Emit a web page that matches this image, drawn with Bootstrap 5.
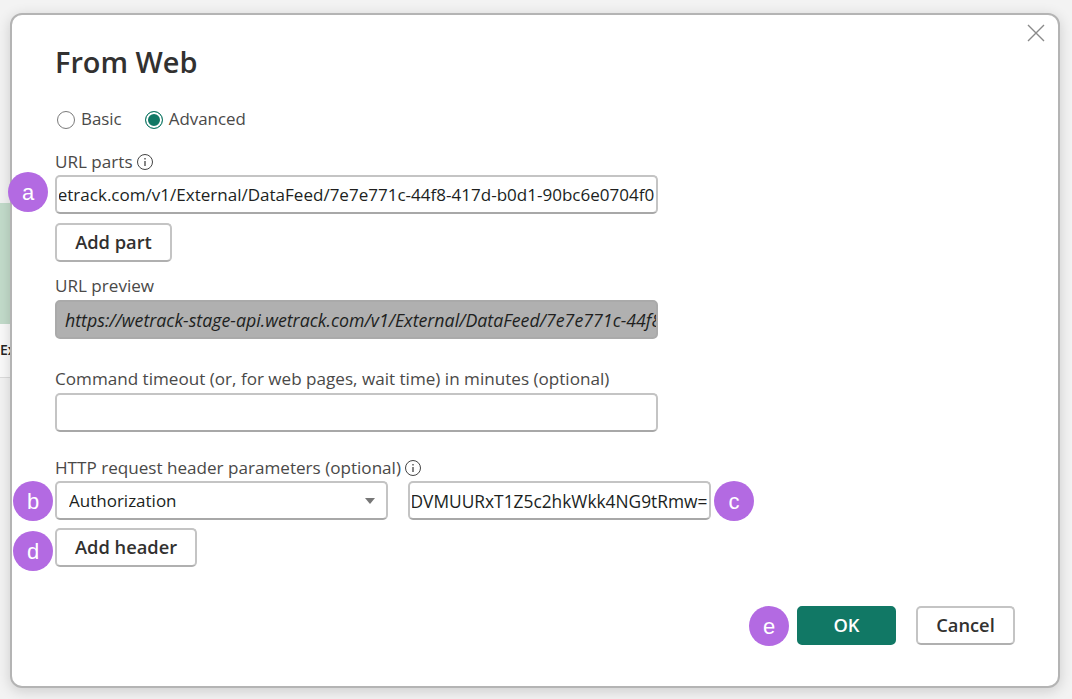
<!DOCTYPE html>
<html lang="en">
<head>
    <meta charset="UTF-8">
    <meta name="viewport" content="width=device-width, initial-scale=1">
    <title>From Web</title>
    <link href="https://cdn.jsdelivr.net/npm/bootstrap@5.3.0/dist/css/bootstrap.min.css" rel="stylesheet">
    <script src="https://cdn.jsdelivr.net/npm/bootstrap@5.3.0/dist/js/bootstrap.bundle.min.js"></script>
    <style>
        html, body { height: 100%; }
        body {
            background: #f3f3f3;
            font-family: "Open Sans", "Noto Sans", sans-serif;
            font-size: 17px;
            color: #3b3a39;
            overflow: hidden;
        }
        .behind-strip { width: 10px; margin-top: 203px; overflow: hidden; }
        .behind-green { height: 121px; background: #c3dccb; }
        .behind-white {
            height: 54px;
            background: #fafafa;
            border-bottom: 1px solid #dcdcdc;
            font-size: 14px;
            font-weight: 600;
            color: #252423;
            white-space: nowrap;
            padding-top: 15px;
        }
        .dialog-box {
            position: absolute;
            left: 10px;
            top: 13px;
            width: 1050px;
            height: 675px;
            background: #fff;
            border: 2px solid #b4b4b4;
            border-radius: 12px;
            box-shadow: 0 3px 14px rgba(0, 0, 0, .16);
            padding: 25px 43px 0 43px;
        }
        .close-x { position: absolute; right: 12px; top: 8px; width: 20px; height: 20px; color: #8a8a8a; }
        .dialog-title { font-size: 28.9px; font-weight: 600; line-height: 44px; margin: 0 0 24px; color: #323130; }
        .radio-row { height: 30px; gap: 23px; margin-bottom: 14px; padding-left: 2px; }
        .radio-item { gap: 6px; font-size: 16.9px; line-height: 24px; color: #4a4948; margin-top: -1px; }
        .radio-item .form-check-input {
            margin: 4px 0 0;
            width: 18px;
            height: 18px;
            border: 1.5px solid #7a7a7a;
        }
        .radio-item .form-check-input:checked {
            background-color: #117865;
            border-color: #117865;
            background-image: none;
            box-shadow: inset 0 0 0 2px #fff;
        }
        .field-label { font-size: 17.1px; line-height: 20px; margin: 0 0 4px; color: #4a4948; display: flex; align-items: center; gap: 3px; }
        .url-label { margin-bottom: 3px; }
        .pbi-input {
            height: 39px;
            border: 2px solid #c4c4c4;
            border-bottom-color: #a8a8a8;
            border-radius: 5px;
            font-size: 17.05px;
            padding: 0 2px;
            color: #201f1e;
            background-color: #fff;
        }
        .wide-field { width: 603px; }
        .pbi-input.preview {
            background: #b0b0b0;
            border-color: #aaa;
            font-style: italic;
            font-size: 17.8px;
            padding-left: 8px;
            padding-right: 0;
            color: #201f1e;
        }
        .pbi-input.header-key {
            width: 333px;
            padding-left: 12px;
            font-size: 17px;
            background-image: url("data:image/svg+xml,%3csvg xmlns='http://www.w3.org/2000/svg' viewBox='0 0 10 6'%3e%3cpath fill='%23777' d='M0 0h10L5 6z'/%3e%3c/svg%3e");
            background-size: 10px 6px;
            background-position: right 11px center;
        }
        .pbi-input.header-value { width: 303px; font-size: 17.35px; }
        .pbi-btn {
            height: 39px;
            background: #fff;
            border: 2px solid #c4c4c4;
            border-bottom-color: #b0b0b0;
            border-radius: 5px;
            font-size: 18.3px;
            font-weight: 600;
            color: #323130;
            padding: 0 0 2px;
            --bs-btn-hover-bg: #f3f2f1;
        }
        .btn-part { width: 117px; margin-top: 9px; }
        .btn-header { width: 142px; margin-top: 8px; }
        .btn-ok { width: 99px; background: #117865; border-color: #117865; color: #fff; }
        .btn-cancel { width: 99px; }
        .preview-label { margin-top: 14px; }
        .timeout-label { margin-top: 30px; }
        .http-label { margin-top: 26px; margin-bottom: 3px; }
        .header-row { gap: 20px; }
        .footer-row { gap: 20px; margin-top: 39px; }
        .step-dot {
            position: absolute;
            width: 40px;
            height: 40px;
            border-radius: 50%;
            background: #b36ae2;
            color: #fff;
            font-family: "Liberation Sans", sans-serif;
            font-size: 22px;
            line-height: 41px;
            text-align: center;
        }
        .dot-a { left: 8px; top: 172px; }
        .dot-b { left: 13px; top: 481px; }
        .dot-c { left: 714px; top: 481px; }
        .dot-d { left: 13px; top: 531px; }
        .dot-e { left: 749px; top: 606px; }
    </style>
</head>
<body>
    <div class="behind-strip">
        <div class="behind-green"></div>
        <div class="behind-white">Ex</div>
    </div>

    <div class="dialog-box">
        <svg class="close-x" viewBox="0 0 20 20" fill="none" stroke="currentColor" stroke-width="1.4"><path d="M2 2l16 16M18 2L2 18"/></svg>
        <h1 class="dialog-title">From Web</h1>

        <div class="d-flex radio-row">
            <label class="d-flex radio-item"><input class="form-check-input" type="radio" name="mode">Basic</label>
            <label class="d-flex radio-item"><input class="form-check-input" type="radio" name="mode" checked>Advanced</label>
        </div>

        <label class="field-label url-label">URL parts
            <svg width="18" height="18" viewBox="0 0 18 18" fill="none" stroke="#444"><circle cx="9" cy="9" r="7.5"/><path d="M9 8v5M9 5v1.4" stroke-width="1.3"/></svg>
        </label>
        <input class="form-control pbi-input wide-field" id="urlPart" type="text" value="https://wetrack-stage-api.wetrack.com/v1/External/DataFeed/7e7e771c-44f8-417d-b0d1-90bc6e0704f0">
        <button class="btn pbi-btn btn-part d-block" type="button">Add part</button>

        <label class="field-label preview-label">URL preview</label>
        <input class="form-control pbi-input preview wide-field" type="text" readonly value="https://wetrack-stage-api.wetrack.com/v1/External/DataFeed/7e7e771c-44f8-417d-b0d1-90bc6e0704f0">

        <label class="field-label timeout-label">Command timeout (or, for web pages, wait time) in minutes (optional)</label>
        <input class="form-control pbi-input wide-field" type="text">

        <label class="field-label http-label">HTTP request header parameters (optional)
            <svg width="18" height="18" viewBox="0 0 18 18" fill="none" stroke="#444"><circle cx="9" cy="9" r="7.5"/><path d="M9 8v5M9 5v1.4" stroke-width="1.3"/></svg>
        </label>
        <div class="d-flex header-row">
            <select class="form-select pbi-input header-key"><option>Authorization</option></select>
            <input class="form-control pbi-input header-value" id="headerValue" type="text" value="Basic dGVzdDpYDVMUURxT1Z5c2hkWkk4NG9tRmw=">
        </div>
        <button class="btn pbi-btn btn-header d-block" type="button">Add header</button>

        <div class="d-flex justify-content-end footer-row">
            <button class="btn pbi-btn btn-ok" type="button">OK</button>
            <button class="btn pbi-btn btn-cancel" type="button">Cancel</button>
        </div>
    </div>

    <div class="step-dot dot-a">a</div>
    <div class="step-dot dot-b">b</div>
    <div class="step-dot dot-c">c</div>
    <div class="step-dot dot-d">d</div>
    <div class="step-dot dot-e">e</div>

    <script>
        // inputs show the end of the long values
        ['urlPart', 'headerValue'].forEach(function (id) {
            let el = document.getElementById(id);
            el.scrollLeft = el.scrollWidth;
        });
    </script>
</body>
</html>
